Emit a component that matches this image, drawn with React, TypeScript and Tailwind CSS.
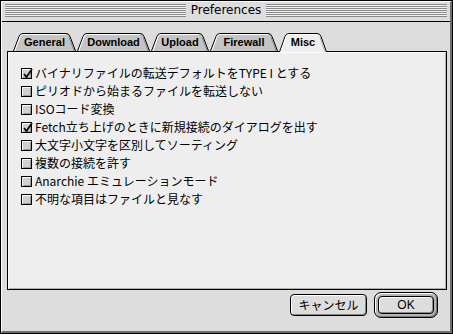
import React from "react";

type TabDef = { label: string; w: number; cls: string; sel?: boolean };

const tabs: TabDef[] = [
  { label: "General", w: 63, cls: "w-[63px]" },
  { label: "Download", w: 73, cls: "w-[73px]" },
  { label: "Upload", w: 58, cls: "w-[58px]" },
  { label: "Firewall", w: 68, cls: "w-[68px]" },
  { label: "Misc", w: 48, cls: "w-[48px]", sel: true },
];

const items: { text: string; checked: boolean }[] = [
  { text: "バイナリファイルの転送デフォルトをTYPE I とする", checked: true },
  { text: "ピリオドから始まるファイルを転送しない", checked: false },
  { text: "ISOコード変換", checked: false },
  { text: "Fetch立ち上げのときに新規接続のダイアログを出す", checked: true },
  { text: "大文字小文字を区別してソーティング", checked: false },
  { text: "複数の接続を許す", checked: false },
  { text: "Anarchie エミュレーションモード", checked: false },
  { text: "不明な項目はファイルと見なす", checked: false },
];

function Tab({ t }: { t: TabDef }) {
  const w = t.w;
  const h = t.sel ? 19 : 18;
  return (
    <div className={`relative flex h-[18px] items-center justify-center ${t.cls} ${t.sel ? "z-10" : ""}`}>
      <svg className="absolute left-0 top-0" width={w} height={h} viewBox={`0 0 ${w} ${h}`}>
        <path
          d={`M0.5,${h} L6,3.5 Q7,0.5 10,0.5 L${w - 10},0.5 Q${w - 7},0.5 ${w - 6},3.5 L${w - 0.5},${h}`}
          fill={t.sel ? "#eeeeee" : "#c4c4c4"}
          stroke="#000"
          strokeWidth="1"
        />
        <path
          d={`M1.9,${h} L7,4 Q8,1.5 10,1.5 L${w - 10},1.5`}
          fill="none"
          stroke="#ffffff"
          strokeWidth="1"
        />
        <path
          d={`M${w - 7},4 L${w - 1.9},${h}`}
          fill="none"
          stroke={t.sel ? "#aaaaaa" : "#8a8a8a"}
          strokeWidth="1"
        />
      </svg>
      <span className="relative mt-[1px] font-['Liberation_Sans',Arial,sans-serif] text-[11px] font-bold leading-[13px] text-black">
        {t.label}
      </span>
    </div>
  );
}

function Checkbox({ checked }: { checked: boolean }) {
  return (
    <div className="relative h-[11px] w-[11px] shrink-0 border border-black bg-[#cfcfcf] shadow-[inset_1px_1px_0_#ffffff,inset_-1px_-1px_0_#9a9a9a]">
      {checked && (
        <svg className="absolute -left-px -top-[2px]" width="13" height="13" viewBox="0 0 13 13">
          <polyline points="3,7 5.5,10 11,2" fill="none" stroke="#000" strokeWidth="1.7" />
        </svg>
      )}
    </div>
  );
}

function Stripes() {
  return (
    <div className="flex flex-1 flex-col gap-px bg-[#f2f2f2]">
      <div className="h-px bg-[#8a8a8a]" />
      <div className="h-px bg-[#8a8a8a]" />
      <div className="h-px bg-[#8a8a8a]" />
      <div className="h-px bg-[#8a8a8a]" />
      <div className="h-px bg-[#8a8a8a]" />
      <div className="h-px bg-[#8a8a8a]" />
      <div className="h-px bg-[#8a8a8a]" />
    </div>
  );
}

export default function App() {
  return (
    <div className="h-[334px] w-[453px] border border-black bg-[#dddddd]">
      <div className="flex h-full flex-col border-b-2 border-l border-r-2 border-t border-b-[#6f6f6f] border-l-white border-r-[#6f6f6f] border-t-white">
        {/* Title bar */}
        <div className="flex h-[20px] shrink-0 items-start border-b border-black bg-[#dddddd] px-[3px] pt-[2px]">
          <Stripes />
          <span className="px-[5px] font-['DejaVu_Sans',sans-serif] text-[12px] leading-[13px] text-black">
            Preferences
          </span>
          <Stripes />
        </div>

        {/* Body */}
        <div className="flex flex-1 flex-col pl-[5px] pr-[3px] pt-[11px]">
          <div className="flex h-[18px] gap-px pl-[6px]">
            {tabs.map((t) => (
              <Tab key={t.label} t={t} />
            ))}
          </div>
          <div className="relative flex h-[239px] flex-col border border-black bg-[#eeeeee] pl-[13px] pt-[12px] shadow-[inset_1px_1px_0_#ffffff,inset_-1px_-1px_0_#b0b0b0]">
            {items.map((it) => (
              <div key={it.text} className="flex h-[18px] items-center gap-[3px]">
                <Checkbox checked={it.checked} />
                <span className="font-['Noto_Sans_CJK_JP','Liberation_Sans',sans-serif] text-[12px] leading-[18px] text-black">
                  {it.text}
                </span>
              </div>
            ))}
          </div>

          {/* Buttons */}
          <div className="mr-[9px] mt-[2px] flex items-center justify-end gap-[7px]">
            <button className="flex h-[22px] w-[77px] items-center justify-center rounded-[4px] border border-black bg-[#dddddd] font-['Noto_Sans_CJK_JP',sans-serif] text-[12px] leading-[14px] text-black shadow-[inset_1px_1px_0_#ffffff,inset_-1px_-1px_0_#8a8a8a]">
              キャンセル
            </button>
            <div className="flex h-[26px] w-[64px] items-center justify-center rounded-[7px] border border-black bg-[#b4b4b4] p-[3px] shadow-[inset_1px_1px_0_#ffffff,inset_-1px_-1px_0_#7a7a7a]">
              <button className="flex h-[18px] w-full items-center justify-center rounded-[4px] border border-black bg-[#dddddd] font-['Liberation_Sans',sans-serif] text-[12px] leading-[14px] text-black shadow-[inset_1px_1px_0_#ffffff,inset_-1px_-1px_0_#8a8a8a]">
                OK
              </button>
            </div>
          </div>
        </div>
      </div>
    </div>
  );
}
